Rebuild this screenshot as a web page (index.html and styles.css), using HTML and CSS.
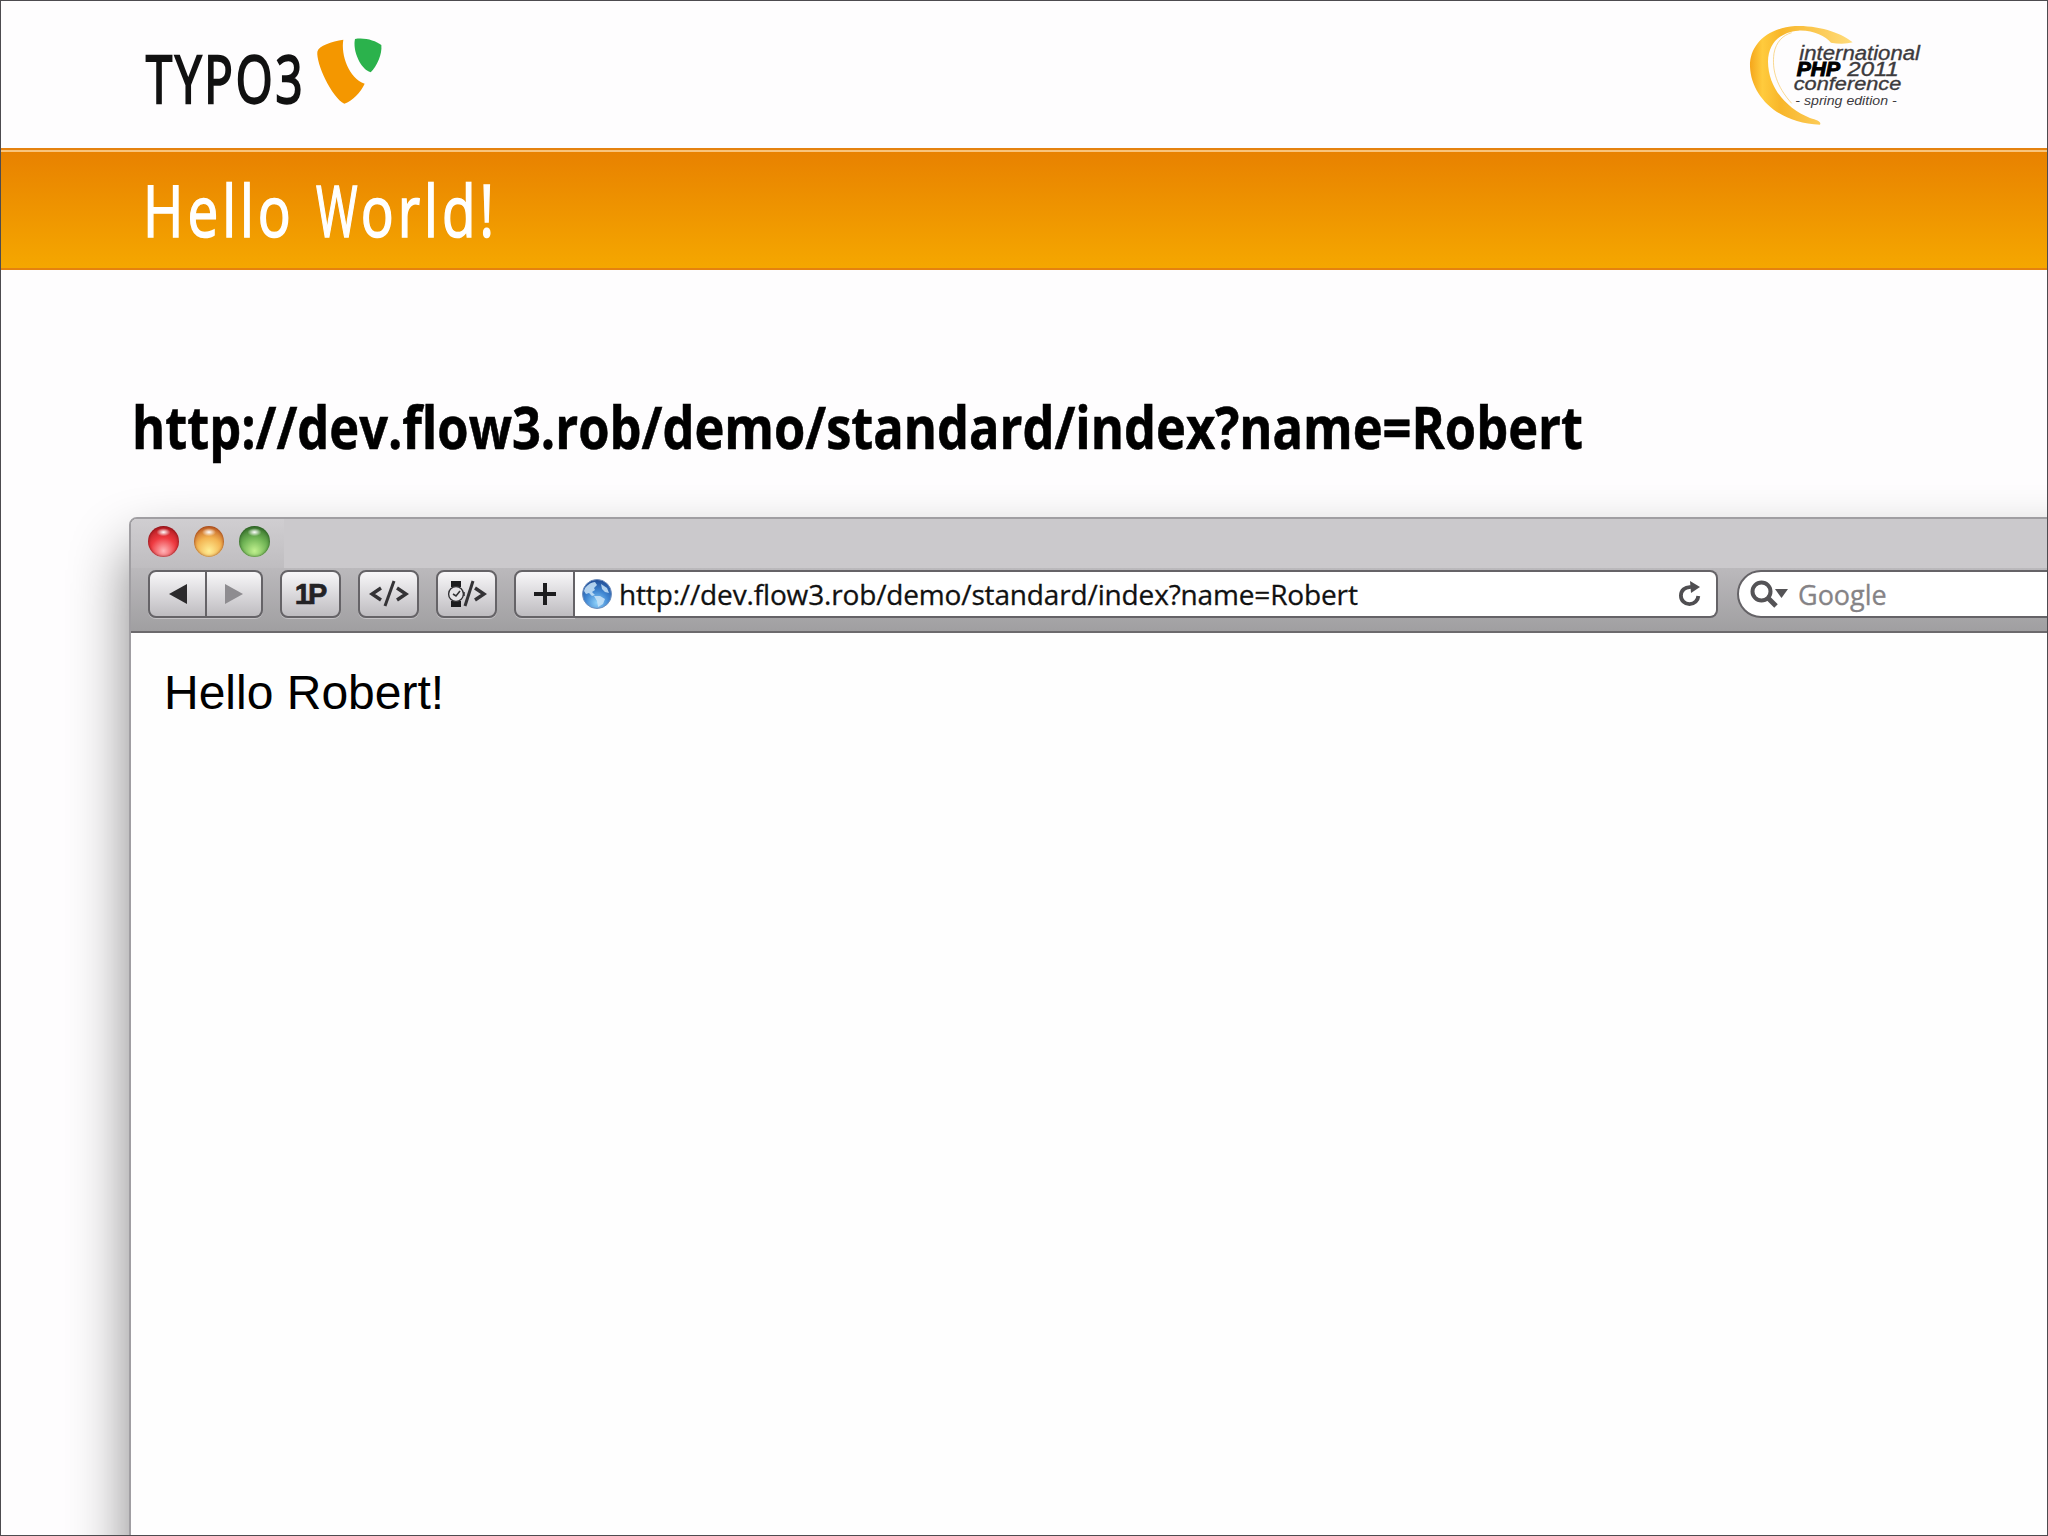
FILE: index.html
```html
<!DOCTYPE html>
<html lang="en">
<head>
    <meta charset="UTF-8">
    <meta name="viewport" content="width=device-width, initial-scale=1.0">
    <title>Hello World!</title>
    <link rel="stylesheet" href="styles.css">
</head>
<body>
    <div class="slide">
        <header class="header">
            <svg class="typo3" viewBox="0 0 900 330">
                <text x="78" y="248" textLength="478" lengthAdjust="spacingAndGlyphs">TYPO3</text>
                <path fill="#f49700" d="M592 95C596 77 635 64 670 59C662 105 687 175 734 191C722 218 697 242 673 251C635 232 588 130 592 95Z"/>
                <path fill="#2bb24c" d="M705 57C735 52 766 62 784 75C787 102 771 138 752 157C722 148 697 93 705 57Z"/>
            </svg>
            <svg class="conference" viewBox="0 0 660 390">
                <defs>
                    <linearGradient id="moon" x1="0" y1="0" x2="1" y2="0">
                        <stop offset="0" stop-color="#f5a61c"/>
                        <stop offset=".12" stop-color="#ffcb3d"/>
                        <stop offset=".3" stop-color="#f8b62a"/>
                        <stop offset="1" stop-color="#ffdc7c"/>
                    </linearGradient>
                </defs>
                <path fill="url(#moon)" d="M398 97C370 72 300 45 225 48C135 55 88 110 90 170C94 260 175 340 300 344C305 335 292 330 270 324C200 295 145 235 144 155C145 95 185 66 235 62C280 60 315 78 333 98C355 102 380 102 398 97Z"/>
                <path fill="none" stroke="#f6c65c" stroke-width="2" d="M215 280C170 230 155 180 162 130C168 95 190 75 215 68"/>
                <g class="conf-text">
                    <text x="238" y="150" font-size="58" textLength="362" lengthAdjust="spacingAndGlyphs">international</text>
                    <text class="php" x="230" y="198" font-size="58" textLength="130" lengthAdjust="spacingAndGlyphs">PHP</text>
                    <text x="382" y="198" font-size="58" textLength="155" lengthAdjust="spacingAndGlyphs">2011</text>
                    <text x="221" y="241" font-size="56" textLength="323" lengthAdjust="spacingAndGlyphs">conference</text>
                    <text class="edition" x="226" y="286" font-size="38" textLength="304" lengthAdjust="spacingAndGlyphs">- spring edition -</text>
                </g>
            </svg>
        </header>

        <div class="banner"><h1>Hello <span class="narrow">W</span>orld!</h1></div>

        <h2 class="address">http://dev.flow3.rob/demo/standard/index?name=Robert</h2>

        <div class="browser">
            <div class="titlebar">
                <div class="lights">
                    <span class="light red"></span>
                    <span class="light yellow"></span>
                    <span class="light green"></span>
                </div>
            </div>
            <div class="toolbar">
                <div class="nav">
                    <button class="btn"><svg width="20" height="20" viewBox="0 0 20 20"><path fill="#2b2a2c" d="M1 10L19 0V20Z"/></svg></button>
                    <button class="btn"><svg width="20" height="20" viewBox="0 0 20 20"><path fill="#8e8c90" d="M19 10L1 0V20Z"/></svg></button>
                </div>
                <button class="btn onep">1P</button>
                <button class="btn">
                    <svg width="40" height="28" viewBox="0 0 40 28" fill="none" stroke="#343336">
                        <path stroke-width="3.4" d="M12 8L3 14L12 20M28 8L37 14L28 20"/>
                        <path stroke-width="3" d="M25 1L16 26"/>
                    </svg>
                </button>
                <button class="btn">
                    <svg width="40" height="28" viewBox="0 0 40 28" fill="none" stroke="#343336">
                        <path fill="#1c1c1e" stroke="none" d="M4 1H14V7H4ZM4 21H14V27H4Z"/>
                        <circle cx="9" cy="14" r="7.4" fill="#e6e4e8" stroke-width="1.4"/>
                        <path stroke-width="1.6" d="M6 14L9 16L13 11M17 12V16"/>
                        <path stroke-width="3.4" d="M28 8L37 14L28 20"/>
                        <path stroke-width="3" d="M26 1L18 26"/>
                    </svg>
                </button>
                <div class="location">
                    <button class="btn plus"><svg width="22" height="22" viewBox="0 0 22 22"><path stroke="#1c1c1e" stroke-width="4" d="M11 0V22M0 11H22"/></svg></button>
                    <div class="url">
                        <svg width="30" height="30" viewBox="0 0 30 30">
                            <defs>
                                <radialGradient id="globe" cx=".5" cy=".8" r=".8">
                                    <stop offset="0" stop-color="#8fd2fa"/>
                                    <stop offset=".5" stop-color="#3f86d2"/>
                                    <stop offset="1" stop-color="#1f4a94"/>
                                </radialGradient>
                            </defs>
                            <circle cx="15" cy="15" r="14.5" fill="url(#globe)" stroke="#6f8fbd"/>
                            <path fill="#c9e4f8" opacity=".85" d="M3 9C6 5 10 3 13 3L15 6L12 9L13 11L10 13L13 16L10 17L7 14L4 15L2 12ZM12 17L18 17L23 20L21 25L16 28L15 22ZM19 5L25 9L27 14L23 13L20 10Z"/>
                        </svg>
                        <span class="url-text">http://dev.flow3.rob/demo/standard/index?name=Robert</span>
                        <svg class="reload" width="24" height="26" viewBox="0 0 24 26">
                            <path fill="none" stroke="#4f4e51" stroke-width="3.8" d="M13 6.2C7 5.5 2.9 9.5 2.9 14.5C2.9 19.5 6.6 23.1 11.5 23.1C16.5 23.1 20 19.5 20.3 15"/>
                            <path fill="#4f4e51" d="M12 0L22 6L13 12Z"/>
                        </svg>
                    </div>
                </div>
                <div class="search">
                    <svg width="38" height="28" viewBox="0 0 38 28">
                        <circle cx="11.5" cy="11.5" r="9" fill="none" stroke="#545356" stroke-width="4"/>
                        <path stroke="#545356" stroke-width="5" d="M17.5 17.5L26 26"/>
                        <path fill="#545356" d="M25 9H38L31.5 18Z"/>
                    </svg>
                    <span>Google</span>
                </div>
            </div>
            <div class="page">Hello Robert!</div>
        </div>
    </div>
</body>
</html>
```
FILE: styles.css
```css
* {
    box-sizing: border-box;
}
body, h1, h2, button {
    margin: 0;
    padding: 0;
}
svg {
    display: block;
    flex: none;
}

.slide {
    width: 2048px;
    height: 1536px;
    border: 1px solid #4d4b4f;
    background: #fefdfe;
    overflow: hidden;
    display: flex;
    flex-direction: column;
    font-family: "Open Sans", "Noto Sans", sans-serif;
}

.header {
    flex: none;
    height: 147px;
    display: flex;
    justify-content: space-between;
    padding: 9px 107px 0 119px;
}
.typo3 {
    width: 300px;
    height: 110px;
    margin-top: 10px;
    font-size: 198px;
    letter-spacing: 12px;
}
.typo3 text {
    stroke: #111;
    stroke-width: 7;
    fill: #111;
}
.conference {
    width: 220px;
    height: 130px;
}
.conf-text {
    font-family: "Liberation Sans", sans-serif;
    font-style: italic;
    fill: #3c3a3d;
    stroke: #3c3a3d;
    stroke-width: 1;
}
.php {
    font-weight: bold;
    fill: #000;
    stroke: #000;
    stroke-width: 3;
}
.edition {
    stroke: none;
}

/* orange title band */
.banner {
    flex: none;
    height: 122px;
    padding: 0 142px;
    border-top: 2px solid #e5820f;
    border-bottom: 2px solid #e5820f;
    box-shadow: inset 0 2px #f9c47b;
    background: linear-gradient(#e88100, #f5a700);
}
.banner h1 {
    color: #fff;
    font-size: 72px;
    font-weight: 500;
    line-height: 118px;
    letter-spacing: 5.2px;
    word-spacing: 4px;
    white-space: nowrap;
    -webkit-text-stroke: 1.6px #fff;
    transform: scaleX(.762);
    transform-origin: 0 0;
}
.narrow {
    display: inline-block;
    margin-right: -13px;
    transform: scaleX(.82);
    transform-origin: 0 0;
}

.address {
    flex: none;
    height: 247px;
    padding-top: 116px;
    margin-left: 131px;
    font-size: 59px;
    font-weight: bold;
    line-height: 80px;
    white-space: nowrap;
    color: #000;
    -webkit-text-stroke: .6px #000;
    transform: scaleX(.857);
    transform-origin: 0 0;
}

/* runs off the slide at the right and bottom */
.browser {
    flex: none;
    width: 2100px;
    height: 1150px;
    margin-left: 128px;
    border: 2px solid #a09ea2;
    border-radius: 8px;
    background: #fefefe;
    box-shadow: 0 32px 58px rgba(0, 0, 0, .48);
    overflow: hidden;
}
.titlebar {
    height: 49px;
    background: #cbc9cc;
}
.lights {
    width: 153px;
    height: 49px;
    padding: 7px 0 0 17px;
    display: flex;
    gap: 15px;
    background: linear-gradient(#d0ced1, #bfbdc0);
}
.light {
    width: 30.5px;
    height: 31px;
    border-radius: 50%;
}
.red {
    background: radial-gradient(ellipse 7px 4px at 50% 20%, #fff, transparent), radial-gradient(circle at 50% 80%, #ffb5b8, #ee3a40 45%, #a8161c 90%);
    box-shadow: inset 0 0 3px #6b1014;
}
.yellow {
    background: radial-gradient(ellipse 7px 4px at 50% 20%, #fff, transparent), radial-gradient(circle at 50% 80%, #ffee95, #f3b452 45%, #b8501c 90%);
    box-shadow: inset 0 0 3px #8a3a18;
}
.green {
    background: radial-gradient(ellipse 7px 4px at 50% 20%, #fff, transparent), radial-gradient(circle at 50% 80%, #c0f08e, #71b556 45%, #2c6424 90%);
    box-shadow: inset 0 0 3px #24501e;
}
.toolbar {
    height: 65px;
    display: flex;
    align-items: flex-start;
    padding: 2px 0 0 17px;
    background: linear-gradient(#bbb9bc, #a09fa1);
    border-bottom: 2px solid #6c6a6d;
}
.btn {
    width: 61px;
    height: 48px;
    margin-right: 17px;
    display: flex;
    align-items: center;
    justify-content: center;
    border: 2px solid #656367;
    border-radius: 8px;
    background: linear-gradient(#f8f7f9, #bebcc0);
    box-shadow: 0 1px #c4c2c5;
}
.nav {
    display: flex;
    margin-right: 17px;
}
.nav .btn {
    width: 56px;
    margin: 0;
}
.nav .btn:first-child {
    width: 59px;
    border-radius: 8px 0 0 8px;
}
.nav .btn:last-child {
    border-left: 0;
    border-radius: 0 8px 8px 0;
}
.onep {
    font: bold 29px "Liberation Sans", sans-serif;
    letter-spacing: -3px;
    color: #232225;
    padding-right: 2px;
    -webkit-text-stroke: .6px #232225;
}
.location {
    display: flex;
    margin-right: 19px;
}
.plus {
    width: 61px;
    margin: 0;
    border-radius: 8px 0 0 8px;
}
.url {
    width: 1143px;
    height: 48px;
    padding: 0 14px 0 7px;
    display: flex;
    align-items: center;
    border: 2px solid #656367;
    border-left: 0;
    border-radius: 0 8px 8px 0;
    background: #fff;
    font-size: 28px;
    color: #111;
}
.url-text {
    margin-left: 7px;
    letter-spacing: -.15px;
    white-space: nowrap;
    -webkit-text-stroke: .3px #111;
}
.reload {
    margin-left: auto;
}
.search {
    flex: none;
    width: 450px;
    height: 48px;
    padding-left: 11px;
    display: flex;
    align-items: center;
    gap: 10px;
    border: 2px solid #656367;
    border-radius: 24px;
    background: #fff;
    font-size: 27px;
    color: #858386;
    -webkit-text-stroke: .3px #858386;
}

.page {
    padding: 32px 33px;
    font: 48px/56px "Liberation Sans", Arial, sans-serif;
    color: #000;
}
```
